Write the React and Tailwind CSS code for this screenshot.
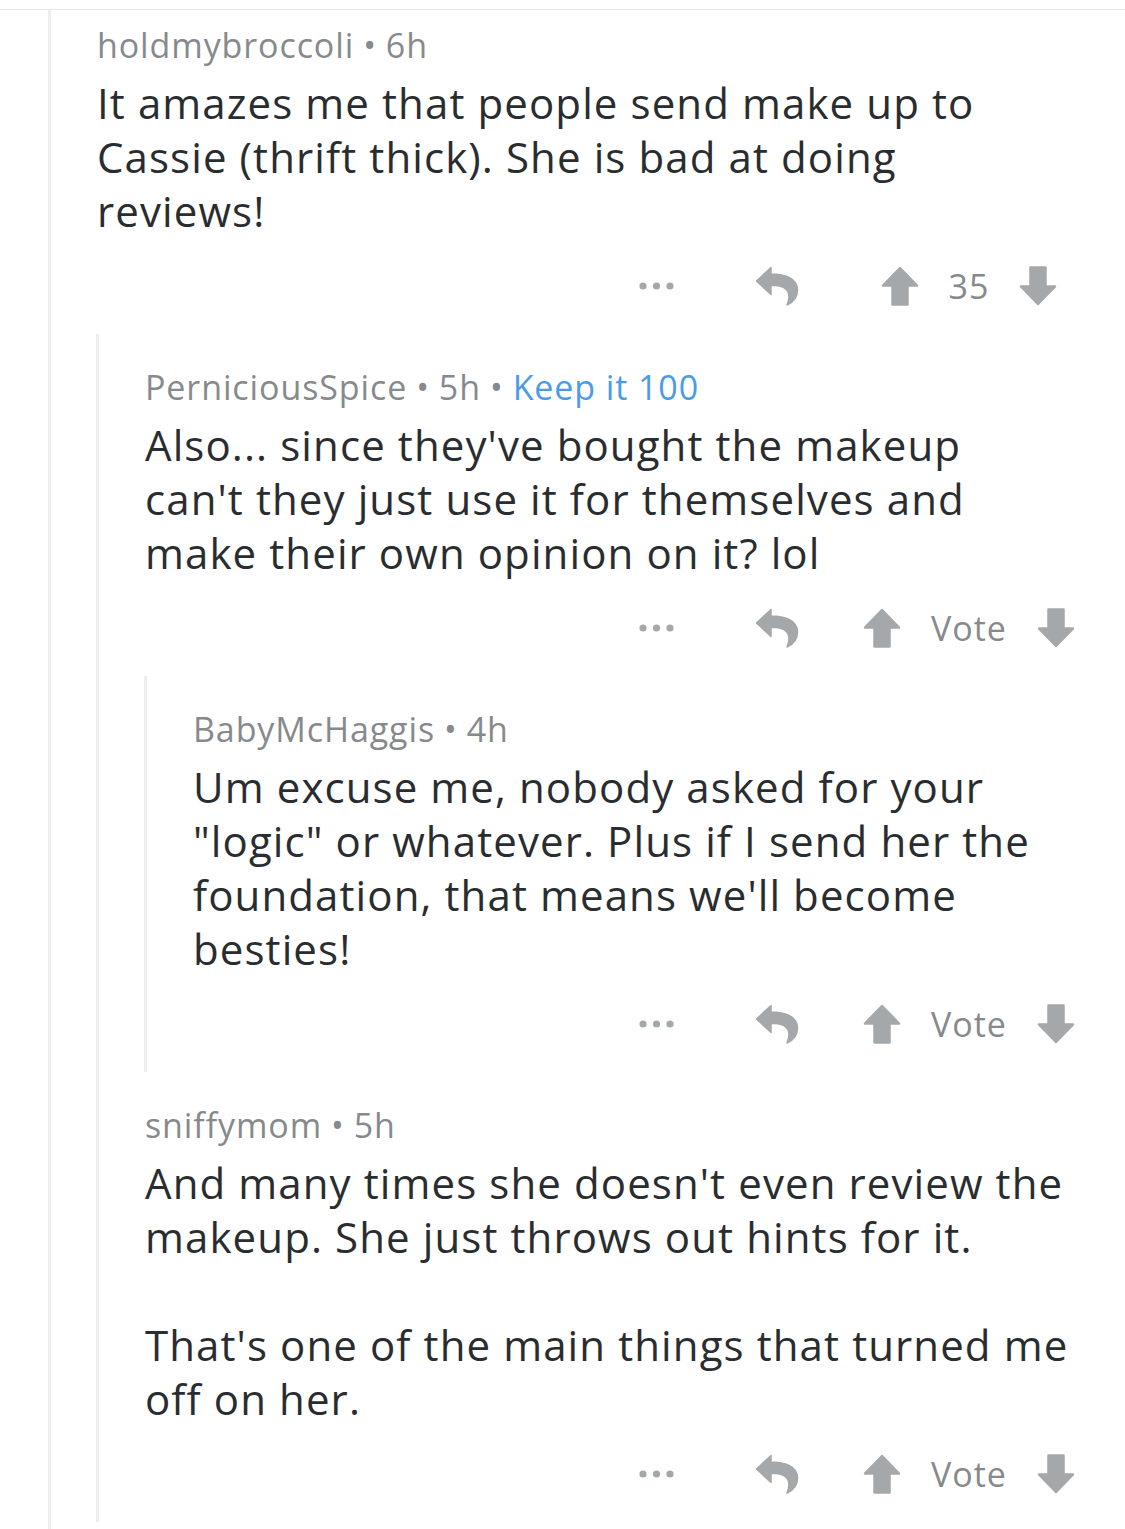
import React from "react";

const ICON = "#A5A8AA";

function Dots() {
  return (
    <svg width="36" height="10" viewBox="0 0 36 10">
      <circle cx="4" cy="5" r="3.6" fill={ICON} />
      <circle cx="17.5" cy="5" r="3.6" fill={ICON} />
      <circle cx="31" cy="5" r="3.6" fill={ICON} />
    </svg>
  );
}

function Reply() {
  return (
    <svg width="44" height="42" viewBox="-1 -1 44 42">
      <path
        d="M0.5 15 L15 1.5 L15 8 C28 8 41.5 12 41.5 24 C41.5 31 38 36 31 39 C34 32 33.5 26 29 22.5 C26 20 21 19.3 15 19.3 L15 28.5 Z"
        fill={ICON}
        stroke={ICON}
        strokeWidth="1.5"
        strokeLinejoin="round"
      />
    </svg>
  );
}

function Arrow({ down }) {
  return (
    <svg
      width="38"
      height="40"
      viewBox="0 0 38 40"
      style={down ? { transform: "rotate(180deg)" } : undefined}
    >
      <path
        d="M19 2 L36 19.5 L26.5 19.5 L26.5 38.5 L11.5 38.5 L11.5 19.5 L2 19.5 Z"
        fill={ICON}
        stroke={ICON}
        strokeWidth="2.5"
        strokeLinejoin="round"
      />
    </svg>
  );
}

function Actions({ score }) {
  return (
    <div className="flex justify-end h-[48px] mt-[24px] pr-[24px]">
      <div className="w-[120px] flex items-center justify-center">
        <Dots />
      </div>
      <div className="w-[120px] flex items-center justify-center">
        <Reply />
      </div>
      <div className="w-[264px] flex items-center justify-center gap-[30px]">
        <Arrow />
        <span className="text-[34px] leading-[40px] tracking-[1px] text-[#878A8C] font-medium">
          {score}
        </span>
        <Arrow down />
      </div>
    </div>
  );
}

function Comment({ user, time, flair, lines, score, top, children }) {
  return (
    <div className={top ? "pt-[15px]" : "pt-[33px]"}>
      <div className="h-[40px] flex items-center text-[34px] leading-[40px] tracking-[0.9px] text-[#878A8C] whitespace-nowrap">
        <span>{user}</span>
        <span className="mx-[9px]">•</span>
        <span>{time}</span>
        {flair && (
          <>
            <span className="mx-[9px]">•</span>
            <span className="text-[#4B9BE8]">{flair}</span>
          </>
        )}
      </div>
      <div className="mt-[11px] text-[42px] leading-[54px] tracking-[1.1px] text-[#2a2d30] whitespace-nowrap">
        {lines.map((l, i) => (
          <div key={i} className="h-[54px]">
            {l}
          </div>
        ))}
      </div>
      <Actions score={score} />
      <div className="h-[24px]" />
      {children}
    </div>
  );
}

function Thread({ children, className = "" }) {
  return (
    <div className={"border-l-[3px] border-[#EDEEF0] pl-[46px] " + className}>
      {children}
    </div>
  );
}

export default function App() {
  return (
    <div
      className="w-[1125px] h-[1529px] bg-white overflow-hidden"
      style={{ fontFamily: '"Open Sans", "Noto Sans", sans-serif' }}
    >
      <div className="h-[10px] border-b border-[#E8E8E8]" />
      <div className="ml-[48px]">
        <Thread className="min-h-[1519px]">
          <Comment
            top
            user="holdmybroccoli"
            time="6h"
            score="35"
            lines={[
              "It amazes me that people send make up to",
              "Cassie (thrift thick). She is bad at doing",
              "reviews!",
            ]}
          >
            <div className="-ml-[1px]">
              <Thread>
                <Comment
                  user="PerniciousSpice"
                  time="5h"
                  flair="Keep it 100"
                  score="Vote"
                  lines={[
                    "Also... since they've bought the makeup",
                    "can't they just use it for themselves and",
                    "make their own opinion on it? lol",
                  ]}
                >
                  <div className="-ml-[1px]">
                    <Thread>
                      <Comment
                        user="BabyMcHaggis"
                        time="4h"
                        score="Vote"
                        lines={[
                          "Um excuse me, nobody asked for your",
                          "\"logic\" or whatever. Plus if I send her the",
                          "foundation, that means we'll become",
                          "besties!",
                        ]}
                      />
                    </Thread>
                  </div>
                </Comment>
                <Comment
                  user="sniffymom"
                  time="5h"
                  score="Vote"
                  lines={[
                    "And many times she doesn't even review the",
                    "makeup. She just throws out hints for it.",
                    "\u00a0",
                    "That's one of the main things that turned me",
                    "off on her.",
                  ]}
                />
              </Thread>
            </div>
          </Comment>
        </Thread>
      </div>
    </div>
  );
}
